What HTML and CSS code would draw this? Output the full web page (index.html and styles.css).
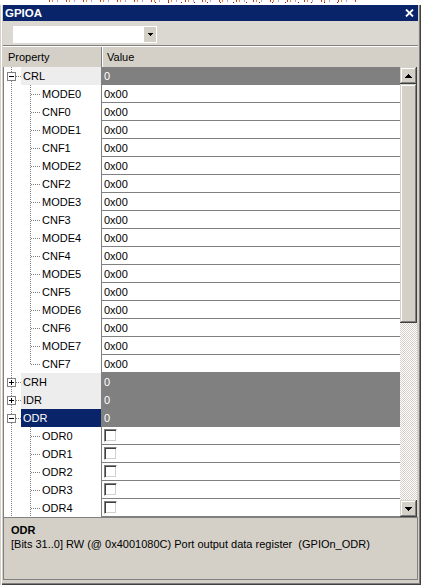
FILE: index.html
```html
<!DOCTYPE html>
<html>
<head>
<meta charset="utf-8">
<link rel="stylesheet" href="styles.css">
</head>
<body>
<div class="strip"></div>
<div class="window">
  <div class="titlebar">
    <span class="title">GPIOA</span>
    <svg class="close" width="9" height="8" viewBox="0 0 9 8"><path d="M1 0.5 L8 7.5 M8 0.5 L1 7.5" stroke="#fff" stroke-width="1.8" fill="none"/></svg>
  </div>
  <div class="toolbar">
    <div class="combo">
      <div class="combo-btn"><svg width="5" height="3" viewBox="0 0 5 3" shape-rendering="crispEdges"><rect x="0" y="0" width="5" height="1"/><rect x="1" y="1" width="3" height="1"/><rect x="2" y="2" width="1" height="1"/></svg></div>
    </div>
  </div>
  <div class="sep"></div>
  <div class="header">
    <div class="hcell prop">Property</div>
    <div class="hcell value">Value</div>
  </div>
  <div class="list">
    <div class="tree">
      <div class="row"><div class="name root"><span class="box"></span><span class="label">CRL</span></div><div class="val grp">0</div></div>
      <div class="row"><div class="name child">MODE0</div><div class="val">0x00</div></div>
      <div class="row"><div class="name child">CNF0</div><div class="val">0x00</div></div>
      <div class="row"><div class="name child">MODE1</div><div class="val">0x00</div></div>
      <div class="row"><div class="name child">CNF1</div><div class="val">0x00</div></div>
      <div class="row"><div class="name child">MODE2</div><div class="val">0x00</div></div>
      <div class="row"><div class="name child">CNF2</div><div class="val">0x00</div></div>
      <div class="row"><div class="name child">MODE3</div><div class="val">0x00</div></div>
      <div class="row"><div class="name child">CNF3</div><div class="val">0x00</div></div>
      <div class="row"><div class="name child">MODE4</div><div class="val">0x00</div></div>
      <div class="row"><div class="name child">CNF4</div><div class="val">0x00</div></div>
      <div class="row"><div class="name child">MODE5</div><div class="val">0x00</div></div>
      <div class="row"><div class="name child">CNF5</div><div class="val">0x00</div></div>
      <div class="row"><div class="name child">MODE6</div><div class="val">0x00</div></div>
      <div class="row"><div class="name child">CNF6</div><div class="val">0x00</div></div>
      <div class="row"><div class="name child">MODE7</div><div class="val">0x00</div></div>
      <div class="row"><div class="name child last">CNF7</div><div class="val">0x00</div></div>
      <div class="row"><div class="name root"><span class="box plus"></span><span class="label">CRH</span></div><div class="val grp">0</div></div>
      <div class="row"><div class="name root"><span class="box plus"></span><span class="label">IDR</span></div><div class="val grp">0</div></div>
      <div class="row"><div class="name root"><span class="box"></span><span class="label sel">ODR</span></div><div class="val grp">0</div></div>
      <div class="row"><div class="name child">ODR0</div><div class="val"><span class="cb"></span></div></div>
      <div class="row"><div class="name child">ODR1</div><div class="val"><span class="cb"></span></div></div>
      <div class="row"><div class="name child">ODR2</div><div class="val"><span class="cb"></span></div></div>
      <div class="row"><div class="name child">ODR3</div><div class="val"><span class="cb"></span></div></div>
      <div class="row"><div class="name child">ODR4</div><div class="val"><span class="cb"></span></div></div>
    </div>
    <div class="vscroll">
      <div class="sbtn"><svg width="7" height="4" viewBox="0 0 7 4" shape-rendering="crispEdges"><rect x="3" y="0" width="1" height="1"/><rect x="2" y="1" width="3" height="1"/><rect x="1" y="2" width="5" height="1"/><rect x="0" y="3" width="7" height="1"/></svg></div>
      <div class="thumb"></div>
      <div class="track"></div>
      <div class="sbtn"><svg width="7" height="4" viewBox="0 0 7 4" shape-rendering="crispEdges"><rect x="0" y="0" width="7" height="1"/><rect x="1" y="1" width="5" height="1"/><rect x="2" y="2" width="3" height="1"/><rect x="3" y="3" width="1" height="1"/></svg></div>
    </div>
  </div>
  <div class="desc">
    <div class="desc-title">ODR</div>
    <div class="desc-text">[Bits 31..0] RW (@ 0x4001080C) Port output data register  (GPIOn_ODR)</div>
  </div>
</div>
</body>
</html>
```
FILE: styles.css
```css
* { box-sizing: border-box; }
html, body { margin: 0; padding: 0; }
body {
  width: 421px;
  height: 585px;
  overflow: hidden;
  background: #fff;
  font-family: "Liberation Sans", Arial, sans-serif;
  font-size: 11px;
  color: #000;
}
.strip {
  height: 5px;
  background:
    repeating-linear-gradient(90deg, transparent 0 3px, #c0392b 3px 4px, transparent 4px 6px, #e08a3c 6px 7px, transparent 7px 11px, #b8a0d8 11px 12px, transparent 12px 17px) 46px 0 / 310px 2px no-repeat,
    repeating-linear-gradient(90deg, transparent 0 5px, #a01010 5px 6px, transparent 6px 13px) 150px 2px / 200px 1px no-repeat,
    #fff;
}
.window {
  height: 580px;
  background: #d4d0c8;
  padding: 0 3px 5px 3px;
  box-shadow: inset 1px 0 #d4d0c8, inset 2px 0 #fff, inset -1px -1px #404040, inset -2px -2px #808080;
  display: flex;
  flex-direction: column;
}
.titlebar {
  height: 16px;
  flex: none;
  background: #0a246a;
  color: #fff;
  display: flex;
  align-items: center;
  justify-content: space-between;
  padding: 0 4px 0 2px;
}
.title { font-weight: bold; font-size: 11.5px; }
.close { display: block; }
.toolbar {
  height: 24px;
  flex: none;
  background: #dbd8d1;
  padding: 5px 0 0 10px;
}
.combo {
  width: 144px;
  height: 17px;
  background: #fff;
  display: flex;
  justify-content: flex-end;
  padding: 1px;
}
.combo-btn {
  width: 12px;
  background: #d4d0c8;
  display: flex;
  align-items: center;
  justify-content: center;
}
.combo-btn svg { display: block; }
.sep {
  height: 2px;
  flex: none;
  border-top: 1px solid #808080;
  border-bottom: 1px solid #fff;
  background: #d4d0c8;
}
.header {
  height: 20px;
  flex: none;
  display: flex;
  background: #d4d0c8;
}
.hcell {
  display: flex;
  align-items: center;
  height: 100%;
}
.hcell.prop {
  width: 99px;
  padding-left: 5px;
  border-right: 1px solid #808080;
}
.hcell.value {
  flex: 1;
  padding-left: 4px;
  border-left: 1px solid #fff;
}
.list {
  height: 450px;
  flex: none;
  display: flex;
  padding-right: 1px;
}
.tree {
  flex: 1;
  background: #fff;
  border-left: 1px solid #808080;
  overflow: hidden;
}
.row {
  display: flex;
  height: 18px;
}
.name {
  --vd: repeating-linear-gradient(#808080 0 1px, transparent 1px 2px);
  --hd: repeating-linear-gradient(90deg, #808080 0 1px, transparent 1px 2px);
  width: 97px;
  flex: none;
  display: flex;
  align-items: center;
  white-space: nowrap;
}
.name.child {
  padding-left: 38px;
  background: var(--vd) 7px 0 / 1px 18px no-repeat,
              var(--vd) 26px 0 / 1px 18px no-repeat,
              var(--hd) 27px 9px / 10px 1px no-repeat;
}
.name.child.last {
  background: var(--vd) 7px 0 / 1px 18px no-repeat,
              var(--vd) 26px 0 / 1px 10px no-repeat,
              var(--hd) 27px 9px / 10px 1px no-repeat;
}
.name.root {
  background: var(--vd) 7px 0 / 1px 18px no-repeat,
              var(--hd) 12px 9px / 5px 1px no-repeat;
  align-items: stretch;
}
.box {
  flex: none;
  width: 9px;
  height: 9px;
  margin: 5px 0 0 3px;
  border: 1px solid #808080;
  background: linear-gradient(#000, #000) center / 5px 1px no-repeat, #fff;
}
.box.plus {
  background: linear-gradient(#000, #000) center / 5px 1px no-repeat,
              linear-gradient(#000, #000) center / 1px 5px no-repeat, #fff;
}
.label {
  flex: 1;
  margin-left: 5px;
  padding-left: 2px;
  background: #ededed;
  display: flex;
  align-items: center;
}
.label.sel {
  background: #0a246a;
  color: #fff;
}
.val {
  flex: 1;
  border-left: 1px solid #808080;
  border-bottom: 1px solid #808080;
  padding-left: 2px;
  display: flex;
  align-items: center;
}
.val.grp {
  background: #808080;
  color: #fff;
}
.cb {
  width: 13px;
  height: 13px;
  background: #fff;
  border: 1px solid;
  border-color: #808080 #fff #fff #808080;
  box-shadow: inset 1px 1px #404040, inset -1px -1px #d4d0c8;
}
.vscroll {
  width: 17px;
  flex: none;
  display: flex;
  flex-direction: column;
  background: repeating-conic-gradient(#d4d0c8 0 25%, #fff 0 50%) 0 0 / 2px 2px;
}
.sbtn, .thumb {
  background: #d4d0c8;
  box-shadow: inset -1px -1px #404040, inset 1px 1px #d4d0c8, inset -2px -2px #808080, inset 2px 2px #fff;
}
.sbtn {
  height: 17px;
  flex: none;
  display: flex;
  align-items: center;
  justify-content: center;
}
.sbtn svg { display: block; }
.thumb {
  height: 239px;
  flex: none;
}
.track { flex: 1; }
.desc {
  height: 63px;
  flex: none;
  border: 1px solid #808080;
  padding: 5px 0 0 7px;
  line-height: 14px;
}
.desc-title { font-weight: bold; }
.desc-text { white-space: pre; }
```
